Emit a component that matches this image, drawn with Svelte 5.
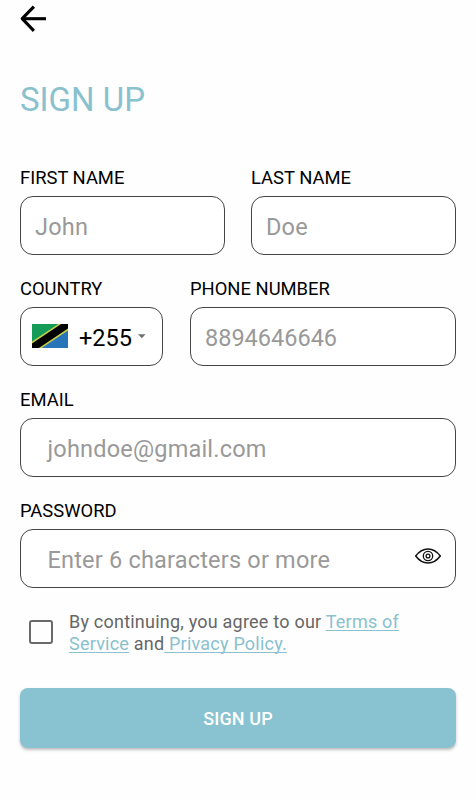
<script lang="ts">
  let firstName = $state('')
  let lastName = $state('')
  let phone = $state('')
  let email = $state('')
  let password = $state('')
  let showPassword = $state(false)
  let accepted = $state(false)

  function submit(e: Event) {
    e.preventDefault()
  }
</script>

<main class="screen">
  <button class="back" type="button" aria-label="Back">
    <svg width="28" height="28" viewBox="0 0 28 28" fill="none" stroke="#000" stroke-width="3.1">
      <path d="M26 13.7H2.5" />
      <path d="M13.9 1.6 2.2 13.700 13.900 25.800" stroke-linejoin="round" />
    </svg>
  </button>

  <h1>SIGN UP</h1>

  <form onsubmit={submit}>
    <div class="row names">
      <label class="field">
        <span class="label">FIRST NAME</span>
        <input type="text" placeholder="John" bind:value={firstName} />
      </label>
      <label class="field">
        <span class="label">LAST NAME</span>
        <input type="text" placeholder="Doe" bind:value={lastName} />
      </label>
    </div>

    <div class="row phone">
      <div class="field">
        <span class="label">COUNTRY</span>
        <button class="country" type="button">
          <svg class="flag" width="36" height="24" viewBox="0 0 36 24">
            <rect width="36" height="24" fill="#159a57" />
            <path d="M0 24 36 0V24Z" fill="#2774b8" />
            <path d="M0 24V17.6L26.4 0H36V6.4L9.6 24Z" fill="#c9cf4c" />
            <path d="M0 24V19.4L29.1 0H36V4.6L6.9 24Z" fill="#000" />
          </svg>
          <span class="code">+255</span>
          <svg class="caret" width="8" height="5" viewBox="0 0 8 5">
            <path d="M0 0.3H7.6L3.8 4.2Z" fill="#707070" />
          </svg>
        </button>
      </div>
      <label class="field">
        <span class="label">PHONE NUMBER</span>
        <input class="number" type="tel" placeholder="8894646646" bind:value={phone} />
      </label>
    </div>

    <label class="field">
      <span class="label">EMAIL</span>
      <input class="wide" type="text" placeholder="johndoe@gmail.com" bind:value={email} />
    </label>

    <div class="field">
      <label class="label" for="password">PASSWORD</label>
      <div class="password">
        <input
          id="password"
          class="wide"
          type={showPassword ? 'text' : 'password'}
          placeholder="Enter 6 characters or more"
          bind:value={password}
        />
        <button class="eye" type="button" aria-label="Show password" onclick={() => (showPassword = !showPassword)}>
          <svg width="28" height="18" viewBox="0 0 28 18" fill="none" stroke="#111">
            <path d="M1.7 9C5 4.600 9.200 2 14 2S23 4.600 26.300 9C23 13.400 18.800 16 14 16S5 13.400 1.700 9Z" stroke-width="1.500" stroke-linejoin="round" />
            <circle cx="14" cy="9" r="4.700" stroke-width="1.300" />
            <circle cx="14" cy="9" r="1.900" stroke-width="1.300" />
          </svg>
        </button>
      </div>
    </div>

    <div class="terms">
      <input type="checkbox" aria-label="Accept terms" bind:checked={accepted} />
      <p>By continuing, you agree to our <a href="#terms">Terms of<br />Service</a> and<a href="#privacy">&nbsp;Privacy Policy.</a></p>
    </div>

    <button class="submit" type="submit">SIGN UP</button>
  </form>
</main>

<style>
  :global(body) {
    background: #fefefe;
  }

  .screen {
    box-sizing: border-box;
    width: 476px;
    height: 800px;
    padding: 5px 20px 0;
    overflow: hidden;
    font-family: Roboto, sans-serif;
    color: #000;
  }

  button {
    font-family: inherit;
    cursor: pointer;
  }

  .back {
    display: block;
    height: 28px;
    padding: 0;
    border: none;
    background: none;
  }

  .back svg {
    display: block;
  }

  h1 {
    margin: 47px 0 0;
    height: 40px;
    font-size: 33px;
    line-height: 40px;
    font-weight: 400;
    color: #89c1cf;
  }

  form {
    display: flex;
    flex-direction: column;
    gap: 11px;
    margin-top: 47px;
  }

  .row {
    display: grid;
  }

  .names {
    grid-template-columns: 205px 205px;
    gap: 26px;
  }

  .phone {
    grid-template-columns: 143px 266px;
    gap: 27px;
  }

  .field {
    display: block;
    min-width: 0;
    height: 100px;
  }

  .label {
    display: block;
    height: 29px;
    font-size: 18.4px;
    line-height: 22px;
    white-space: nowrap;
  }

  input:not([type='checkbox']),
  .country {
    box-sizing: border-box;
    display: block;
    width: 100%;
    height: 59px;
    border: 1.3px solid #444;
    border-radius: 13px;
    background: #fff;
    font-size: 23.5px;
  }

  input:not([type='checkbox']) {
    padding: 3px 14px 0;
    font-family: inherit;
    letter-spacing: 0.2px;
    outline: none;
  }

  input:not([type='checkbox']).number {
    letter-spacing: 0;
  }

  input:not([type='checkbox']).wide {
    padding-left: 24px;
    text-indent: 2.5px;
  }

  input::placeholder {
    color: #999;
    opacity: 1;
  }

  .country {
    display: flex;
    align-items: center;
    padding: 0 0 0 11px;
    color: #000;
  }

  .flag {
    margin-bottom: 1px;
  }

  .code {
    margin-left: 11px;
    padding-top: 2px;
  }

  .caret {
    margin-left: 6px;
  }

  .password {
    position: relative;
  }

  .eye {
    position: absolute;
    top: 18px;
    right: 14px;
    padding: 0;
    border: none;
    background: none;
  }

  .eye svg {
    display: block;
  }

  .terms {
    display: flex;
    align-items: center;
    gap: 16px;
    height: 44px;
  	padding-left: 9px;
  }

  .terms input {
    appearance: none;
    flex: none;
    width: 24px;
    height: 24px;
    margin: 0 0 2px;
    border: 2.5px solid #6a6a6a;
    border-radius: 3px;
  }

  .terms input:checked {
    background: #89c1cf;
  }

  .terms p {
    margin: 0;
    font-size: 18px;
    line-height: 22px;
    letter-spacing: 0.22px;
    color: #666;
    white-space: nowrap;
  }

  .terms a {
    color: #89c1cf;
    text-decoration: underline;
    text-decoration-thickness: 1px;
    text-underline-offset: 2px;
    text-decoration-skip-ink: none;
  }

  .submit {
    height: 60px;
    margin-top: 22px;
    border: none;
    border-radius: 8px;
    background: #89c2d0;
    box-shadow: 0 2px 3px rgba(0, 0, 0, 0.25);
    color: #fff;
    font-size: 18px;
    font-weight: 500;
    letter-spacing: 0.1px;
  }
</style>
